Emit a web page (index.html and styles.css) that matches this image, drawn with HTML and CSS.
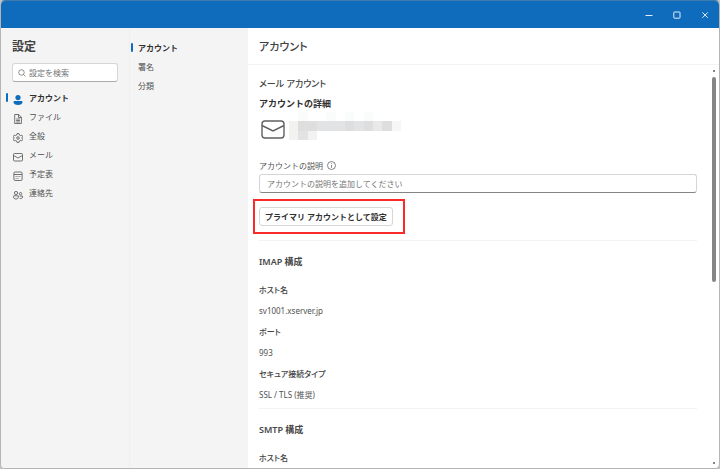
FILE: index.html
```html
<!DOCTYPE html>
<html lang="ja">
<head>
<meta charset="utf-8">
<meta name="viewport" content="width=device-width, initial-scale=1">
<title>設定</title>
<link rel="stylesheet" href="styles.css">
</head>
<body>
<div class="window">
  <header class="titlebar">
    <button class="caption" type="button" aria-label="最小化"><svg width="8" height="8" viewBox="0 0 8 8"><path d="M.5 4.5h7"/></svg></button>
    <button class="caption" type="button" aria-label="最大化"><svg width="8" height="8" viewBox="0 0 8 8"><rect x=".8" y="1" width="6.2" height="6.2" rx=".6"/></svg></button>
    <button class="caption" type="button" aria-label="閉じる"><svg width="8" height="8" viewBox="0 0 8 8"><path d="M1.4 1.4l5.4 5.4M6.8 1.4L1.4 6.8"/></svg></button>
  </header>
  <div class="columns">
    <aside class="sidebar">
      <h1 class="sidebar-title">設定</h1>
      <label class="search">
        <svg class="search-icon" width="8" height="8" viewBox="0 0 9 9"><circle cx="3.9" cy="3.9" r="3.1"/><path d="M6.100 6.100l2.300 2.300"/></svg>
        <input type="text" placeholder="設定を検索" aria-label="設定を検索">
      </label>
      <nav class="nav">
        <a class="nav-item active" href="#account"><svg viewBox="0 0 10 10"><circle class="solid" cx="5" cy="2.6" r="2.6"/><path class="solid" d="M1.600 6h6.800c.7 0 1.100.5 1.100 1.100C9.500 9 7.600 10 5 10S.5 9 .5 7.100C.5 6.500.9 6 1.600 6z"/></svg>アカウント</a>
        <a class="nav-item" href="#file"><svg viewBox="0 0 10 10"><path d="M1.700.5h4l2.700 2.700v6.300H1.700zM5.500.5v3h2.900M3.200 5h3.700M3.200 6.500h3.700M3.200 8h3.700"/></svg>ファイル</a>
        <a class="nav-item" href="#general"><svg viewBox="0 0 10 10"><path d="M4 .6h2l.4 1.500.9.5 1.500-.5 1 1.700L8.700 5l1.100 1.200-1 1.700-1.500-.5-.9.500L6 9.400H4l-.4-1.500-.9-.5-1.500.5-1-1.700L1.300 5 .2 3.800l1-1.700 1.500.5.9-.5z"/><circle cx="5" cy="5" r="1.300"/></svg>全般</a>
        <a class="nav-item" href="#mail"><svg viewBox="0 0 10 10"><rect x=".5" y="1.500" width="9" height="7.500" rx="1"/><path d="M.5 3.500L5 6l4.500-2.500"/></svg>メール</a>
        <a class="nav-item" href="#calendar"><svg viewBox="0 0 10 10"><rect x=".9" y="1" width="8.200" height="8.500" rx="1.200"/><path d="M.9 3.500h8.200M2.600 5.500h1M4.500 5.500h1M6.400 5.500h1M2.600 7.500h1M4.500 7.500h1"/></svg>予定表</a>
        <a class="nav-item" href="#contacts"><svg viewBox="0 0 10 10"><circle cx="3" cy="3" r="1.600"/><circle cx="7.500" cy="3.700" r="1.200"/><path d="M.8 5.800h4.500v1.400C5.300 8.300 4.300 9 3 9S.5 8.300.5 7.200c0-.8 0-1.200.3-1.400zM6.700 6.100h2.800v1c0 1.100-1.200 1.600-2.800 1.400"/></svg>連絡先</a>
      </nav>
    </aside>
    <nav class="subnav">
      <a class="nav-item active" href="#accounts">アカウント</a>
      <a class="nav-item" href="#signature">署名</a>
      <a class="nav-item" href="#category">分類</a>
    </nav>
    <main class="main">
      <h2 class="main-title">アカウント</h2>
      <div class="scroll-area">
        <div class="content">
          <p class="crumb">メール アカウント</p>
          <h3 class="section-title">アカウントの詳細</h3>
          <div class="identity">
            <svg class="envelope" width="24" height="20" viewBox="0 0 24 20"><rect x="1" y="1" width="22" height="17" rx="3"/><path d="M1 5.500L12 11l11-5.500"/></svg>
            <svg class="masked" width="112" height="28" viewBox="0 0 12 3" preserveAspectRatio="none" shape-rendering="crispEdges" aria-hidden="true">
              <path fill="#fafbfb" d="M1 0h1v1H1zM4 0h1v1H4zM6 0h1v1H6zM8 0h1v1H8z"/>
              <path fill="#f2f2f1" d="M0 1h1v1H0zM0 2h1v1H0zM2 2h1v1H2z"/>
              <path fill="#dededf" d="M1 1h2v1H1zM6 1h1v1H6zM8 1h1v1H8zM10 1h1v1H10z"/>
              <path fill="#e2e3e4" d="M3 1h3v1H3zM7 1h1v1H7zM1 2h1v1H1z"/>
              <path fill="#e9e9ea" d="M9 1h1v1H9z"/>
              <path fill="#f6f6f6" d="M11 1h1v1H11z"/>
            </svg>
          </div>
          <label class="field-label" for="description">アカウントの説明
            <svg width="9" height="9" viewBox="0 0 9 9"><circle cx="4.500" cy="4.500" r="4"/><path d="M4.500 4v2.800M4.500 2.200v.9"/></svg>
          </label>
          <input class="field" id="description" type="text" placeholder="アカウントの説明を追加してください">
          <div class="highlight"><button class="primary-action" type="button">プライマリ アカウントとして設定</button></div>
          <section class="config">
            <h3>IMAP 構成</h3>
            <dl>
              <dt>ホスト名</dt><dd>sv1001.xserver.jp</dd>
              <dt>ポート</dt><dd>993</dd>
              <dt>セキュア接続タイプ</dt><dd>SSL / TLS (推奨)</dd>
            </dl>
          </section>
          <section class="config">
            <h3>SMTP 構成</h3>
            <dl><dt>ホスト名</dt></dl>
          </section>
        </div>
        <div class="scrollbar" aria-hidden="true"><i class="arrow"></i><i class="thumb"></i><i class="arrow"></i></div>
      </div>
    </main>
  </div>
</div>
</body>
</html>
```
FILE: styles.css
```css
* { box-sizing: border-box; }
body {
  margin: 0;
  background: #c4c4c4;
  color: #505050;
  font-family: "Noto Sans", "Noto Sans CJK JP", sans-serif;
  font-size: 8px;
  line-height: 19px;
}
h1, h2, h3, p, dl, dd { margin: 0; }
button, input { font: inherit; color: inherit; }
a { color: inherit; text-decoration: none; }
svg { flex: none; fill: none; stroke: currentColor; }
.window {
  display: flex;
  flex-direction: column;
  height: 100vh;
  overflow: hidden;
  border: 1px solid #b5b5b5;
  border-top-color: #3f7cab;
  border-radius: 5px;
  background: #fff;
}
.titlebar {
  display: flex;
  justify-content: flex-end;
  flex: none;
  height: 27px;
  background: #0f6cbd;
  color: #fff;
}
.caption {
  display: grid;
  place-items: center;
  width: 28px;
  padding: 0;
  border: 0;
  background: none;
  color: #e4eef7;
}
.columns { display: flex; flex: 1; min-height: 0; }
.sidebar {
  flex: none;
  width: 129px;
  padding: 9px 11px;
  border-right: 1px solid #efefef;
  background: #f4f4f4;
}
.sidebar-title {
  color: #424242;
  font-size: 12px;
  font-weight: 700;
  line-height: 20px;
}
.search {
  display: flex;
  align-items: center;
  gap: 3px;
  height: 19px;
  margin: 6px 0;
  padding: 0 5px;
  border: 1px solid #d6d6d6;
  border-bottom-color: #ababab;
  border-radius: 3px;
  background: #fff;
  color: #757575;
}
.search-icon { stroke-width: .9; }
.search input {
  width: 100%;
  min-width: 0;
  padding: 0;
  border: 0;
  outline: 0;
  background: none;
}
::placeholder { color: #757575; opacity: 1; }
.nav-item {
  display: flex;
  align-items: center;
  gap: 6px;
  position: relative;
  height: 19px;
}
.nav-item svg { width: 10px; height: 10px; margin: 4px 0 0 1px; stroke-width: .8; }
.nav-item.active { color: #303030; font-weight: 700; }
.nav-item.active svg { color: #0f6cbd; }
.nav-item .solid { fill: currentColor; stroke: none; }
.nav-item.active::before {
  content: "";
  position: absolute;
  left: -6px;
  width: 2px;
  height: 9px;
  border-radius: 1px;
  background: #0f6cbd;
}
.subnav {
  flex: none;
  width: 118px;
  padding: 10px 8px;
  background: #f4f4f4;
}
.subnav .nav-item.active::before { left: -7px; }
.main { display: flex; flex: 1; flex-direction: column; min-width: 0; }
.main-title {
  flex: none;
  height: 37px;
  padding-left: 11px;
  border-bottom: 1px solid #f3f3f3;
  color: #424242;
  font-size: 11px;
  font-weight: 500;
  font-feature-settings: "palt";
  line-height: 38px;
}
.scroll-area { display: flex; flex: 1; min-height: 0; overflow: hidden; }
.content { flex: 1; min-width: 0; padding: 9px 0 0 11px; }
.crumb {
  color: #424242;
  font-size: 9px;
  font-weight: 500;
  font-feature-settings: "palt";
  line-height: 20px;
}
.section-title {
  color: #303030;
  font-size: 9px;
  font-weight: 700;
  line-height: 20px;
}
.identity { display: flex; align-items: center; gap: 4px; margin: -3px 0 17px; padding-left: 2px; }
.envelope { margin-top: 9px; color: #606060; stroke-width: 1.4; }
.masked { stroke: none; }
.field-label { display: flex; align-items: center; gap: 4px; height: 16px; }
.field-label svg { stroke-width: .7; }
.field {
  display: block;
  width: 100%;
  height: 19px;
  margin-top: 1px;
  padding: 0 7px;
  border: 1px solid #d6d6d6;
  border-bottom-color: #858585;
  border-radius: 3px;
}
.highlight {
  position: relative;
  width: fit-content;
  margin: 14px 0;
}
.highlight::after {
  content: "";
  position: absolute;
  inset: -8px -12px -8px -6px;
  border: 2px solid #fb2a2a;
  pointer-events: none;
}
.primary-action {
  display: block;
  height: 19px;
  padding: 0 5px;
  border: 1px solid #d6d6d6;
  border-radius: 3px;
  background: #fff;
  color: #303030;
  font-weight: 700;
  line-height: 17px;
}
.config { padding: 11px 0 3px; border-top: 1px solid #f3f3f3; }
.config h3 { margin-bottom: 7px; color: #484848; font-size: 9px; font-weight: 600; line-height: 20px; }
.config dl { line-height: 21px; }
.config dt { color: #424242; font-weight: 500; font-feature-settings: "palt"; }
.scrollbar {
  display: flex;
  flex: none;
  flex-direction: column;
  align-items: center;
  gap: 5px;
  width: 4px;
  margin: 5px 3px 4px 15px;
}
.arrow { width: 2px; height: 2px; background: #858585; }
.thumb { width: 4px; height: 205px; border-radius: 2px; background: #858585; }
.arrow:last-child { margin-top: auto; }
```
